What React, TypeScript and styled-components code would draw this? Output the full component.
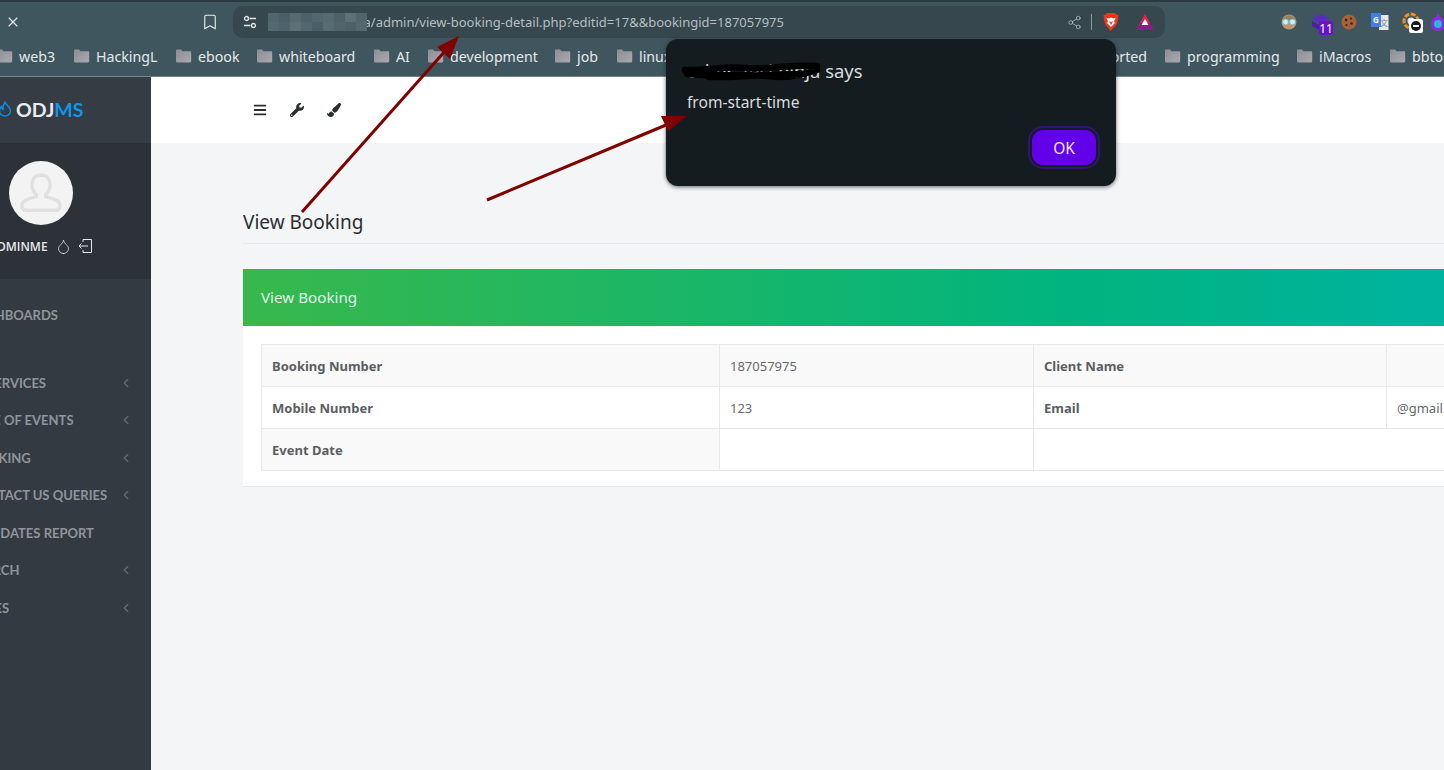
import React from 'react';
import styled, {createGlobalStyle} from 'styled-components';
import {X, Bookmark, Share2, Droplet, ChevronLeft} from 'lucide-react';
import {FaBars, FaWrench, FaPaintBrush} from 'react-icons/fa';

const uiFont = `"Noto Sans", "Open Sans", sans-serif`;
const siteFont = `"Open Sans", "Noto Sans", sans-serif`;

const bookmarks = [
  {name: 'web3', width: 77},
  {name: 'HackingL', width: 102},
  {name: 'ebook', width: 81},
  {name: 'whiteboard', width: 117},
  {name: 'AI', width: 54},
  {name: 'development', width: 127},
  {name: 'job', width: 62},
  {name: 'linux', width: 60},
];

const rightBookmarks = [
  {name: 'programming', width: 132},
  {name: 'iMacros', width: 93},
  {name: 'bbtools', width: 70},
];

const menu = [
  {label: 'DASHBOARDS', arrow: false, gap: 30},
  {label: 'DJ SERVICES', arrow: true, gap: 0},
  {label: 'TYPE OF EVENTS', arrow: true, gap: 0},
  {label: 'BOOKING', arrow: true, gap: 0},
  {label: 'CONTACT US QUERIES', arrow: true, gap: 0},
  {label: 'B/W DATES REPORT', arrow: false, gap: 0},
  {label: 'SEARCH', arrow: true, gap: 0},
  {label: 'PAGES', arrow: true, gap: 0},
];

const mosaic = [
  '#50656d', '#4a5f67', '#566a71', '#4b6068', '#52666d', '#566a71', '#4d6169', '#5c7076', '#50646b',
  '#54686f', '#4f636a', '#5c7076', '#52666d', '#4a5e66', '#586c73', '#50646b', '#4c6067', '#54686f',
];

const GlobalStyle = createGlobalStyle`
  html, body {
    margin: 0;
    padding: 0;
    background: #f4f5f7;
  }
  * {
    box-sizing: border-box;
  }
`;

const Page = styled.div`
  position: relative;
  width: 1444px;
  height: 770px;
  overflow: hidden;
  font-family: ${siteFont};
`;

const Chrome = styled.div`
  height: 77px;
  background: #40565f;
  border-top: 2px solid #2b3a40;
  border-bottom: 1px solid #75868c;
  color: #e6ebec;
  font-family: ${uiFont};
`;

const TabRow = styled.div`
  display: flex;
  align-items: center;
  height: 36px;
  padding-top: 4px;
`;

const ToolCluster = styled.div`
  display: flex;
  flex: none;
  align-items: center;
  justify-content: space-between;
  width: 233px;
  padding: 0 14px 0 5px;
`;

const AddressBar = styled.div`
  display: flex;
  flex: none;
  align-items: center;
  width: 932px;
  height: 32px;
  padding: 0 10px;
  border-radius: 10px;
  background: #36474e;
  color: #b4bfc2;
  font-size: 13px;
`;

const SiteInfo = styled.svg`
  flex: none;
  width: 14px;
  height: 14px;
  margin-right: 11px;
`;

const Mosaic = styled.div`
  position: relative;
  z-index: 1;
  display: grid;
  flex: none;
  grid-template-columns: repeat(9, 11px);
  grid-auto-rows: 9px;
  width: 99px;
  margin-right: -3.5px;
`;

const MosaicCell = styled.span<{$tone: string}>`
  background: ${p => p.$tone};
`;

const UrlText = styled.span`
  flex: 1;
  white-space: nowrap;
`;

const Divider = styled.span`
  width: 1px;
  height: 16px;
  margin: 0 9px;
  background: #8a989c;
`;

const BarIcon = styled.svg`
  flex: none;
  width: 20px;
  height: 20px;
`;

const TriangleIcon = styled.svg`
  flex: none;
  width: 20px;
  height: 20px;
  margin-left: 14px;
`;

const Extensions = styled.div`
  display: flex;
  flex: none;
  align-items: center;
  margin-left: 114px;
`;

const ExtensionIcon = styled.svg<{$gap?: number}>`
  flex: none;
  width: 20px;
  height: 20px;
  margin-left: ${p => p.$gap ?? 0}px;
  overflow: visible;
`;

const BookmarkRow = styled.div`
  display: flex;
  align-items: center;
  height: 38px;
  margin-left: -4px;
  padding-bottom: 2px;
  font-size: 14.2px;
`;

const BookmarkItem = styled.div<{$width: number}>`
  display: flex;
  flex: none;
  align-items: center;
  gap: 6px;
  width: ${p => p.$width}px;
  color: #e4e9ea;
  white-space: nowrap;
`;

const BookmarkSpacer = styled.div`
  flex: none;
  width: 488px;
  padding-right: 17px;
  color: #e4e9ea;
  text-align: right;
`;

const FolderIcon = styled.svg`
  flex: none;
  width: 17px;
  height: 14px;
`;

const Shell = styled.div`
  display: flex;
  height: 693px;
`;

const Sidebar = styled.aside`
  flex: none;
  width: 151px;
  overflow: hidden;
  background: #343a41;
`;

const Brand = styled.div`
  display: flex;
  align-items: center;
  gap: 4px;
  height: 66px;
  padding-bottom: 2px;
  background: #353c43;
  color: #e9ebed;
  font-family: "Lato", sans-serif;
  font-size: 19.5px;
  font-weight: 700;
`;

const BrandAccent = styled.span`
  color: #0a97ee;
`;

const Profile = styled.div`
  height: 136px;
  padding-top: 18px;
  background: #2d3138;
`;

const Avatar = styled.div`
  display: flex;
  align-items: center;
  justify-content: center;
  width: 64px;
  height: 64px;
  margin-left: 9px;
  border-radius: 50%;
  background: #f3f3f3;
`;

const ProfileRow = styled.div`
  display: flex;
  align-items: center;
  height: 20px;
  margin-top: 11px;
  margin-left: -11px;
  color: #e8e9ea;
  font-size: 12px;
  font-weight: 600;
  white-space: nowrap;
`;

const ProfileIcons = styled.div`
  display: flex;
  align-items: center;
  gap: 6px;
  margin-left: 7px;
  color: #e8e9ea;
`;

const Menu = styled.nav`
  padding-top: 17.5px;
`;

const MenuItem = styled.div<{$gap: number}>`
  display: flex;
  align-items: center;
  justify-content: space-between;
  height: 37.5px;
  margin-bottom: ${p => p.$gap}px;
  padding-right: 18px;
  color: #8f959a;
  font-family: "Lato", sans-serif;
  font-size: 13px;
  font-weight: 700;
  white-space: nowrap;
`;

const MenuLabel = styled.span`
  margin-left: -31px;
`;

const Arrow = styled(ChevronLeft)`
  flex: none;
  color: #62686e;
`;

const Main = styled.main`
  flex: 1;
  min-width: 0;
  overflow: hidden;
`;

const TopNav = styled.div`
  display: flex;
  align-items: center;
  gap: 23px;
  height: 66px;
  padding-left: 102px;
  background: #fff;
  color: #2a2d30;
  font-size: 14px;
`;

const Content = styled.div`
  width: 1400px;
  padding: 65px 0 0 92px;
`;

const PageTitle = styled.h1`
  margin: 0 0 25px;
  padding-bottom: 7px;
  border-bottom: 1px solid #e6e8eb;
  color: #2a2d31;
  font-family: ${uiFont};
  font-size: 19px;
  font-weight: 400;
  line-height: 28px;
`;

const Card = styled.section`
  background: #fff;
  border-bottom: 1px solid #e6e8ec;
`;

const CardHeader = styled.div`
  display: flex;
  align-items: center;
  height: 57px;
  padding: 0 0 2px 18px;
  background: linear-gradient(90deg, #38b84c 0, #00b47f 830px, #00b3a0 1201px);
  color: #dff5e8;
  font-family: ${uiFont};
  font-size: 15.2px;
`;

const CardBody = styled.div`
  padding: 18px 18px 15px;
`;

const DetailTable = styled.table`
  width: 1290px;
  table-layout: fixed;
  border-collapse: collapse;
  font-family: ${uiFont};
  font-size: 13px;
  color: #66696d;
`;

const Row = styled.tr<{$striped?: boolean}>`
  height: 42px;
  background: ${p => (p.$striped ? '#f9f9f9' : '#fff')};
`;

const Head = styled.th<{$shade?: boolean}>`
  padding: 0 10px;
  border: 1px solid #e7e9ec;
  background: ${p => (p.$shade ? '#f9f9f9' : 'transparent')};
  color: #5b5e62;
  font-weight: 700;
  text-align: left;
`;

const Cell = styled.td`
  padding: 0 10px;
  border: 1px solid #e7e9ec;
  white-space: nowrap;
`;

const Overlay = styled.svg`
  position: absolute;
  left: 0;
  top: 0;
  width: 1444px;
  height: 770px;
  pointer-events: none;
`;

const Dialog = styled.div`
  position: absolute;
  left: 666px;
  top: 39px;
  width: 450px;
  height: 147px;
  padding: 19px 20px 0 21px;
  border-radius: 12px;
  background: #151c20;
  box-shadow: 0 1px 4px rgba(20, 25, 30, 0.65);
  color: #d8dcde;
  font-family: ${uiFont};
`;

const DialogTitle = styled.div`
  position: relative;
  height: 26px;
  font-size: 18.4px;
  line-height: 26px;
  white-space: nowrap;
`;

const Scribble = styled.svg`
  position: absolute;
  left: -8px;
  top: 1px;
  width: 146px;
  height: 26px;
`;

const DialogMessage = styled.div`
  margin-top: 8px;
  font-size: 15.6px;
  line-height: 20px;
`;

const DialogActions = styled.div`
  display: flex;
  justify-content: flex-end;
  margin-top: 18px;
`;

const OkButton = styled.div`
  display: flex;
  align-items: center;
  justify-content: center;
  width: 64px;
  height: 35px;
  border-radius: 11px;
  background: #6200ea;
  box-shadow: 0 0 0 2px #151c20, 0 0 0 4px #2f1670;
  color: #f0e9fd;
  font-size: 15.5px;
`;

const Folder = () => (
  <FolderIcon viewBox="0 0 17 14">
    <defs>
      <linearGradient id="folderFill" x1="0" y1="0" x2="1" y2="1">
        <stop offset="0" stopColor="#8d8d97" />
        <stop offset="1" stopColor="#a9a9ae" />
      </linearGradient>
    </defs>
    <path d="M1 1.5C1 .8 1.5.5 2 .5h4l1.5 1.8H15c.7 0 1.2.5 1.2 1.2v8.7c0 .7-.5 1.2-1.2 1.2H2c-.6 0-1-.5-1-1.2z" fill="url(#folderFill)" />
  </FolderIcon>
);

const UserGlyph = () => (
  <svg width="42" height="42" viewBox="0 0 42 42" fill="none" stroke="#e0e0e0" strokeWidth="3.4">
    <path d="M21 3c-5.6 0-9 4-9 9.5 0 4.4 1.7 8 4.3 10v2.2C11 26.5 2.5 27.5 2 33c-.3 3.4 1.4 5.2 4 5.2h30c2.6 0 4.3-1.8 4-5.2-.5-5.5-9-6.5-14.3-8.3v-2.2c2.6-2 4.3-5.6 4.3-10C30 7 26.6 3 21 3z" />
  </svg>
);

const LogoutGlyph = () => (
  <svg width="16" height="16" viewBox="0 0 16 16" fill="none" stroke="currentColor" strokeWidth="1">
    <path d="M5 4V1.5h8.5v13H5V12M10 8H1M3.5 5.5 1 8l2.5 2.5" />
  </svg>
);

const Flame = () => (
  <svg width="14" height="16" viewBox="0 0 14 16" fill="none" stroke="#0a8fe4" strokeWidth="1.4" style={{marginLeft: -2}}>
    <path d="M7 1c.5 2.5 5.5 5 5.5 9a5.5 5 0 0 1-11 0c0-2 1-3.5 2-4.5 0 1.5.5 2.5 1.5 3C5 6 5.5 3 7 1z" />
  </svg>
);

export default function App() {
  return (
    <Page>
      <GlobalStyle />
      <Chrome>
        <TabRow>
          <ToolCluster>
            <X size={16} strokeWidth={1.6} />
            <Bookmark size={18} strokeWidth={1.5} />
          </ToolCluster>
          <AddressBar>
            <SiteInfo viewBox="0 0 14 14" fill="none" stroke="#e0e5e6" strokeWidth="1.3">
              <circle cx="3.5" cy="3.5" r="2" />
              <path d="M6.5 3.5H13M1 10.5h6.5" />
              <circle cx="10.5" cy="10.5" r="2" />
            </SiteInfo>
            <Mosaic>
              {mosaic.map((tone, i) => (
                <MosaicCell key={i} $tone={tone} />
              ))}
            </Mosaic>
            <UrlText>a/admin/view-booking-detail.php?editid=17&amp;&amp;bookingid=187057975</UrlText>
            <Share2 size={15} strokeWidth={1.2} color="#b6c0c3" />
            <Divider />
            <BarIcon viewBox="0 0 20 20">
              <path d="M6 1h8l1.5 1.5 2 .5-.5 5-1 4-5 5.5L10 19l-1-.5L4 12 3 8l-.5-5 2-.5z" fill="#f3331f" />
              <path d="M5.5 6 8 6.5 10 5.5l2 1L14.5 6 13 9.5l1 1.5-4 4-4-4 1-1.5z" fill="#fff" />
              <path d="M8 9.5h1.5L10 11l.5-1.5H12L10 13z" fill="#f3331f" />
            </BarIcon>
            <TriangleIcon viewBox="0 0 20 20">
              <path d="M10 2 19 18H1z" fill="#8c1a8f" />
              <path d="M10 2 15 11H5z" fill="#e0244f" />
              <path d="M10 7 13.5 13h-7z" fill="#fff" />
            </TriangleIcon>
          </AddressBar>
          <Extensions>
            <ExtensionIcon viewBox="0 0 20 20">
              <circle cx="10" cy="10" r="7.5" fill="#c9906f" />
              <path d="M3 8c2-6 12-6 14 0z" fill="#8b8560" />
              <circle cx="6.5" cy="10" r="3" fill="#d5ecef" stroke="#7fb2bb" />
              <circle cx="13.5" cy="10" r="3" fill="#d5ecef" stroke="#7fb2bb" />
            </ExtensionIcon>
            <ExtensionIcon $gap={13} viewBox="0 0 20 20">
              <path d="M9 2 18 7 9 12 0 7z" fill="#5b2bbf" />
              <path d="M0 9 9 14 18 9v5l-9 5-9-5z" fill="#4a1fa0" />
              <rect x="7" y="9" width="14" height="14" rx="3" fill="#6a12c9" />
              <text x="14" y="21" textAnchor="middle" fontSize="12" fill="#fff" fontFamily="Noto Sans">11</text>
            </ExtensionIcon>
            <ExtensionIcon $gap={7} viewBox="0 0 20 20">
              <circle cx="10" cy="10" r="7.5" fill="#a9603a" />
              <circle cx="7" cy="8" r="1.3" fill="#3c2315" />
              <circle cx="12" cy="6.5" r="1.1" fill="#3c2315" />
              <circle cx="12.5" cy="11.5" r="1.3" fill="#3c2315" />
              <circle cx="7.5" cy="13" r="1.1" fill="#3c2315" />
            </ExtensionIcon>
            <ExtensionIcon $gap={11} viewBox="0 0 20 20">
              <path d="M9 3h9.5v15H9z" fill="#e5e7e8" />
              <path d="M1 1h10v14H1z" fill="#3f7fe8" />
              <text x="6" y="11" textAnchor="middle" fontSize="8" fontWeight="700" fill="#fff" fontFamily="Noto Sans">G</text>
              <text x="14" y="14" textAnchor="middle" fontSize="8" fill="#7b8488" fontFamily="Noto Sans CJK SC">文</text>
            </ExtensionIcon>
            <ExtensionIcon $gap={12} viewBox="0 0 20 20">
              <circle cx="9" cy="9" r="7" fill="none" stroke="#e6902c" strokeWidth="3" strokeDasharray="5 1.5" />
              <circle cx="9" cy="9" r="3.5" fill="#e8e8e8" />
              <rect x="7" y="7" width="14" height="14" rx="2.5" fill="#fff" />
              <circle cx="14" cy="14" r="5" fill="#15191c" />
              <rect x="11" y="13" width="6" height="2" fill="#fff" />
            </ExtensionIcon>
            <ExtensionIcon $gap={6} viewBox="0 0 20 20">
              <path d="M10 1c1 4 7 6 7 11a7 7 0 0 1-14 0c0-5 6-7 7-11z" fill="#8a2be2" />
              <circle cx="10" cy="12" r="4" fill="#29b6d8" />
            </ExtensionIcon>
          </Extensions>
        </TabRow>
        <BookmarkRow>
          {bookmarks.map(b => (
            <BookmarkItem key={b.name} $width={b.width}>
              <Folder />
              {b.name}
            </BookmarkItem>
          ))}
          <BookmarkSpacer>orted</BookmarkSpacer>
          {rightBookmarks.map(b => (
            <BookmarkItem key={b.name} $width={b.width}>
              <Folder />
              {b.name}
            </BookmarkItem>
          ))}
        </BookmarkRow>
      </Chrome>

      <Shell>
        <Sidebar>
          <Brand>
            <Flame />
            <span>
              ODJ<BrandAccent>MS</BrandAccent>
            </span>
          </Brand>
          <Profile>
            <Avatar>
              <UserGlyph />
            </Avatar>
            <ProfileRow>
              ADMINME
              <ProfileIcons>
                <Droplet size={17} strokeWidth={1.1} />
                <LogoutGlyph />
              </ProfileIcons>
            </ProfileRow>
          </Profile>
          <Menu>
            {menu.map(item => (
              <MenuItem key={item.label} $gap={item.gap}>
                <MenuLabel>{item.label}</MenuLabel>
                {item.arrow && <Arrow size={14} strokeWidth={2.5} />}
              </MenuItem>
            ))}
          </Menu>
        </Sidebar>
        <Main>
          <TopNav>
            <FaBars />
            <FaWrench />
            <FaPaintBrush />
          </TopNav>
          <Content>
            <PageTitle>View Booking</PageTitle>
            <Card>
              <CardHeader>View Booking</CardHeader>
              <CardBody>
                <DetailTable>
                  <colgroup>
                    <col width="458" />
                    <col width="314" />
                    <col width="353" />
                    <col width="165" />
                  </colgroup>
                  <tbody>
                    <Row $striped>
                      <Head>Booking Number</Head>
                      <Cell>187057975</Cell>
                      <Head>Client Name</Head>
                      <Cell />
                    </Row>
                    <Row>
                      <Head>Mobile Number</Head>
                      <Cell>123</Cell>
                      <Head>Email</Head>
                      <Cell>@gmail.com</Cell>
                    </Row>
                    <Row>
                      <Head $shade>Event Date</Head>
                      <Cell />
                      <Cell colSpan={2} />
                    </Row>
                  </tbody>
                </DetailTable>
              </CardBody>
            </Card>
          </Content>
        </Main>
      </Shell>

      <Dialog>
        <DialogTitle>
          odms.zecl.ninja says
          <Scribble viewBox="0 0 146 26">
            <path d="M6 11c20 1 40-4 60-2s50-4 72-2M8 15c30 3 60-1 90 3 14 1 30-4 40-7M30 18c25 1 50-3 96-3" stroke="#000" strokeWidth="6.5" strokeLinecap="round" fill="none" />
          </Scribble>
        </DialogTitle>
        <DialogMessage>from-start-time</DialogMessage>
        <DialogActions>
          <OkButton>OK</OkButton>
        </DialogActions>
      </Dialog>

      <Overlay viewBox="0 0 1444 770">
        <path d="M302 212 446 50" stroke="#800000" strokeWidth="3" fill="none" />
        <path d="M459 36 450 59 437 47z" fill="#800000" />
        <path d="M487 200 666 125" stroke="#800000" strokeWidth="3" fill="none" />
        <path d="M687 116 668 131 661 116z" fill="#800000" />
      </Overlay>
    </Page>
  );
}
